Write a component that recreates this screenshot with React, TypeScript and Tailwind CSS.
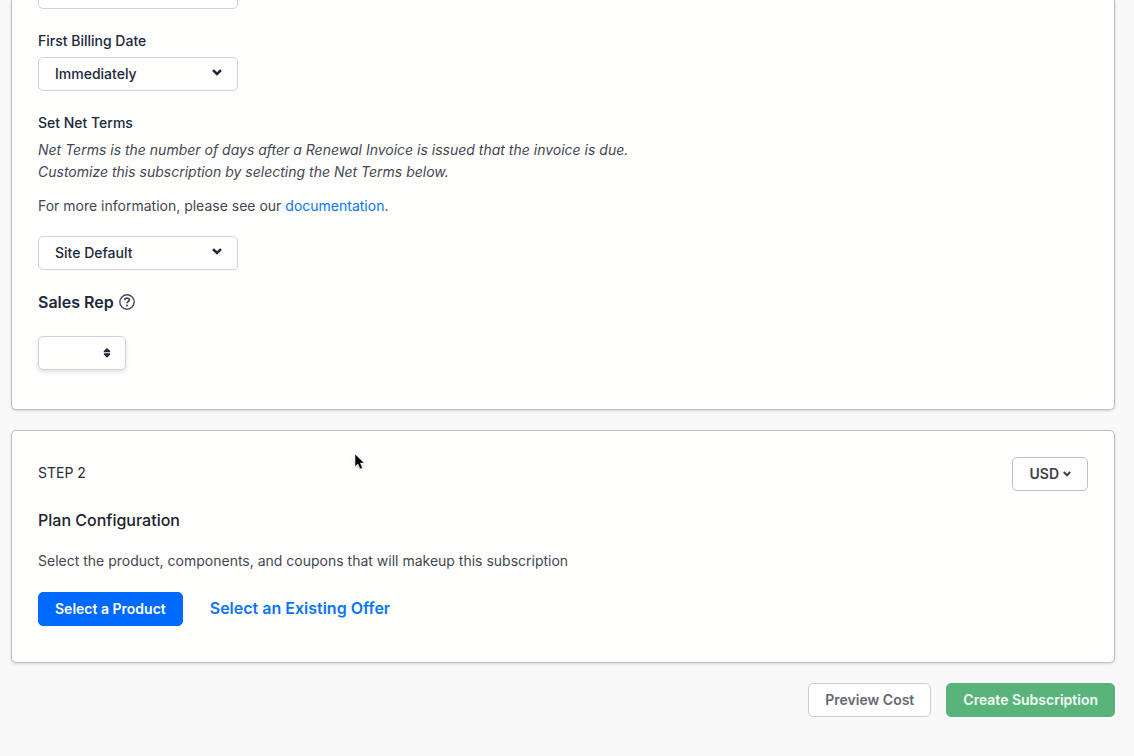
import type { SVGProps } from "react";

function Chevron(props: SVGProps<SVGSVGElement>) {
  return (
    <svg viewBox="0 0 10 7" fill="none" stroke="currentColor" aria-hidden="true" {...props}>
      <path d="M1 1.1 L5 5 L9 1.1" strokeWidth="2.6" />
    </svg>
  );
}

function SortArrows() {
  return (
    <svg
      viewBox="0 0 8 10"
      fill="currentColor"
      aria-hidden="true"
      className="pointer-events-none absolute top-3 right-[15px] h-[10px] w-2"
    >
      <path d="M3.4 0.4 Q4 -0.1 4.6 0.4 L7.1 3.1 Q7.5 4.3 6.7 4.3 H1.3 Q0.5 4.3 0.9 3.1Z" />
      <path d="M3.4 9.2 Q4 9.7 4.6 9.2 L7.1 6.5 Q7.5 5.3 6.7 5.3 H1.3 Q0.5 5.3 0.9 6.5Z" />
    </svg>
  );
}

function HelpIcon() {
  return (
    <svg viewBox="0 0 16 16" fill="none" stroke="currentColor" className="size-4 text-[#4b4b55]" aria-hidden="true">
      <circle cx="8" cy="8" r="7.2" strokeWidth="1.4" />
      <path d="M5.7 6.3 C5.7 4.8 6.7 4.1 8 4.1 C9.4 4.1 10.4 4.8 10.4 6 C10.4 7.6 8 7.6 8 9.3" strokeWidth="1.8" />
      <circle cx="8" cy="11.5" r="1.1" fill="currentColor" stroke="none" />
    </svg>
  );
}

function Pointer() {
  return (
    <svg
      viewBox="0 0 12 18"
      aria-hidden="true"
      className="pointer-events-none absolute top-[22px] left-[342px] h-[18px] w-3 drop-shadow"
    >
      <path
        d="M1 1 V13.6 L3.9 10.9 L6 16 L8.4 15 L6.4 10.1 H10.2Z"
        fill="#000"
        stroke="#fff"
        strokeWidth="0.5"
      />
    </svg>
  );
}

function SelectField({ id, value }: { id: string; value: string }) {
  return (
    <div className="relative w-[200px]">
      <select
        id={id}
        className="block h-[34px] w-full appearance-none rounded-[5px] border border-[#d0d2da] bg-[#fefefd] pr-10 pl-4 font-medium text-[#20293a]"
      >
        <option>{value}</option>
      </select>
      <Chevron className="pointer-events-none absolute top-3 right-4 h-[7px] w-[10px] text-[#20293a]" />
    </div>
  );
}

const card = "border-[#bfc0c4] bg-[#fefefd] px-[26px] shadow-[0_1px_3px_rgba(0,0,0,0.14)]";
const button = "h-[34px] rounded-[5px] border px-4 font-semibold";

export default function App() {
  return (
    <main className="min-h-screen bg-[#f9f9fa] pr-[19px] pb-10 pl-[11px] font-['Inter',sans-serif] text-[14px] leading-[22px] text-[#444751]">
      <section className={`rounded-b-[5px] border border-t-0 pb-[39px] ${card}`}>
        <select
          aria-label="Billing"
          className="block h-[9px] w-[200px] appearance-none rounded-b-[5px] border border-t-0 border-[#d0d2da] bg-[#fefefd]"
        />

        <label htmlFor="first-billing" className="mt-[21px] mb-[5px] block font-medium text-[#20293a]">
          First Billing Date
        </label>
        <SelectField id="first-billing" value="Immediately" />

        <label htmlFor="net-terms" className="mt-[21px] block font-medium text-[#20293a]">
          Set Net Terms
        </label>
        <p className="mt-[5px] italic">
          Net Terms is the number of days after a Renewal Invoice is issued that the invoice is due.
          <br />
          Customize this subscription by selecting the Net Terms below.
        </p>
        <p className="mt-3 mb-[19px]">
          For more information, please see our{" "}
          <a href="#documentation" className="text-[#0b74f8]">
            documentation
          </a>
          .
        </p>
        <SelectField id="net-terms" value="Site Default" />

        <div className="mt-5 mb-[22px] flex items-center gap-[5px]">
          <label htmlFor="sales-rep" className="text-base font-semibold text-[#20293a]">
            Sales Rep
          </label>
          <HelpIcon />
        </div>
        <div className="relative w-[88px] text-[#20293a]">
          <select
            id="sales-rep"
            className="block h-[34px] w-full appearance-none rounded-[5px] border border-[#d0d2da] bg-[#fefefd] px-4 shadow-[0_2px_4px_rgba(0,0,0,0.12)]"
          />
          <SortArrows />
        </div>
      </section>

      <section className={`relative mt-5 rounded-[5px] border pt-[26px] pb-9 ${card}`}>
        <div className="flex items-start justify-between">
          <p className="pt-[5px] text-[#2a2c35]">STEP 2</p>
          <button type="button" className={`flex items-center gap-1 border-[#bfc0c8] text-[#3d3f48] ${button}`}>
            USD
            <Chevron className="h-[6px] w-2" />
          </button>
        </div>
        <h2 className="mt-[17px] text-base font-medium text-[#20222e]">Plan Configuration</h2>
        <p className="mt-[18px]">Select the product, components, and coupons that will makeup this subscription</p>
        <div className="mt-5 flex items-start gap-[27px]">
          <button type="button" className={`border-[#006aff] bg-[#006aff] text-white ${button}`}>
            Select a Product
          </button>
          <a href="#offers" className="pt-1 text-base font-semibold text-[#0b74f8]">
            Select an Existing Offer
          </a>
        </div>
        <Pointer />
      </section>

      <footer className="mt-5 flex justify-end gap-[15px]">
        <button type="button" className={`border-[#cdced2] bg-[#fefefe] text-[#66686f] ${button}`}>
          Preview Cost
        </button>
        <button type="button" className={`border-[#59b47c] bg-[#59b47c] text-[#f4fbf6] ${button}`}>
          Create Subscription
        </button>
      </footer>
    </main>
  );
}
